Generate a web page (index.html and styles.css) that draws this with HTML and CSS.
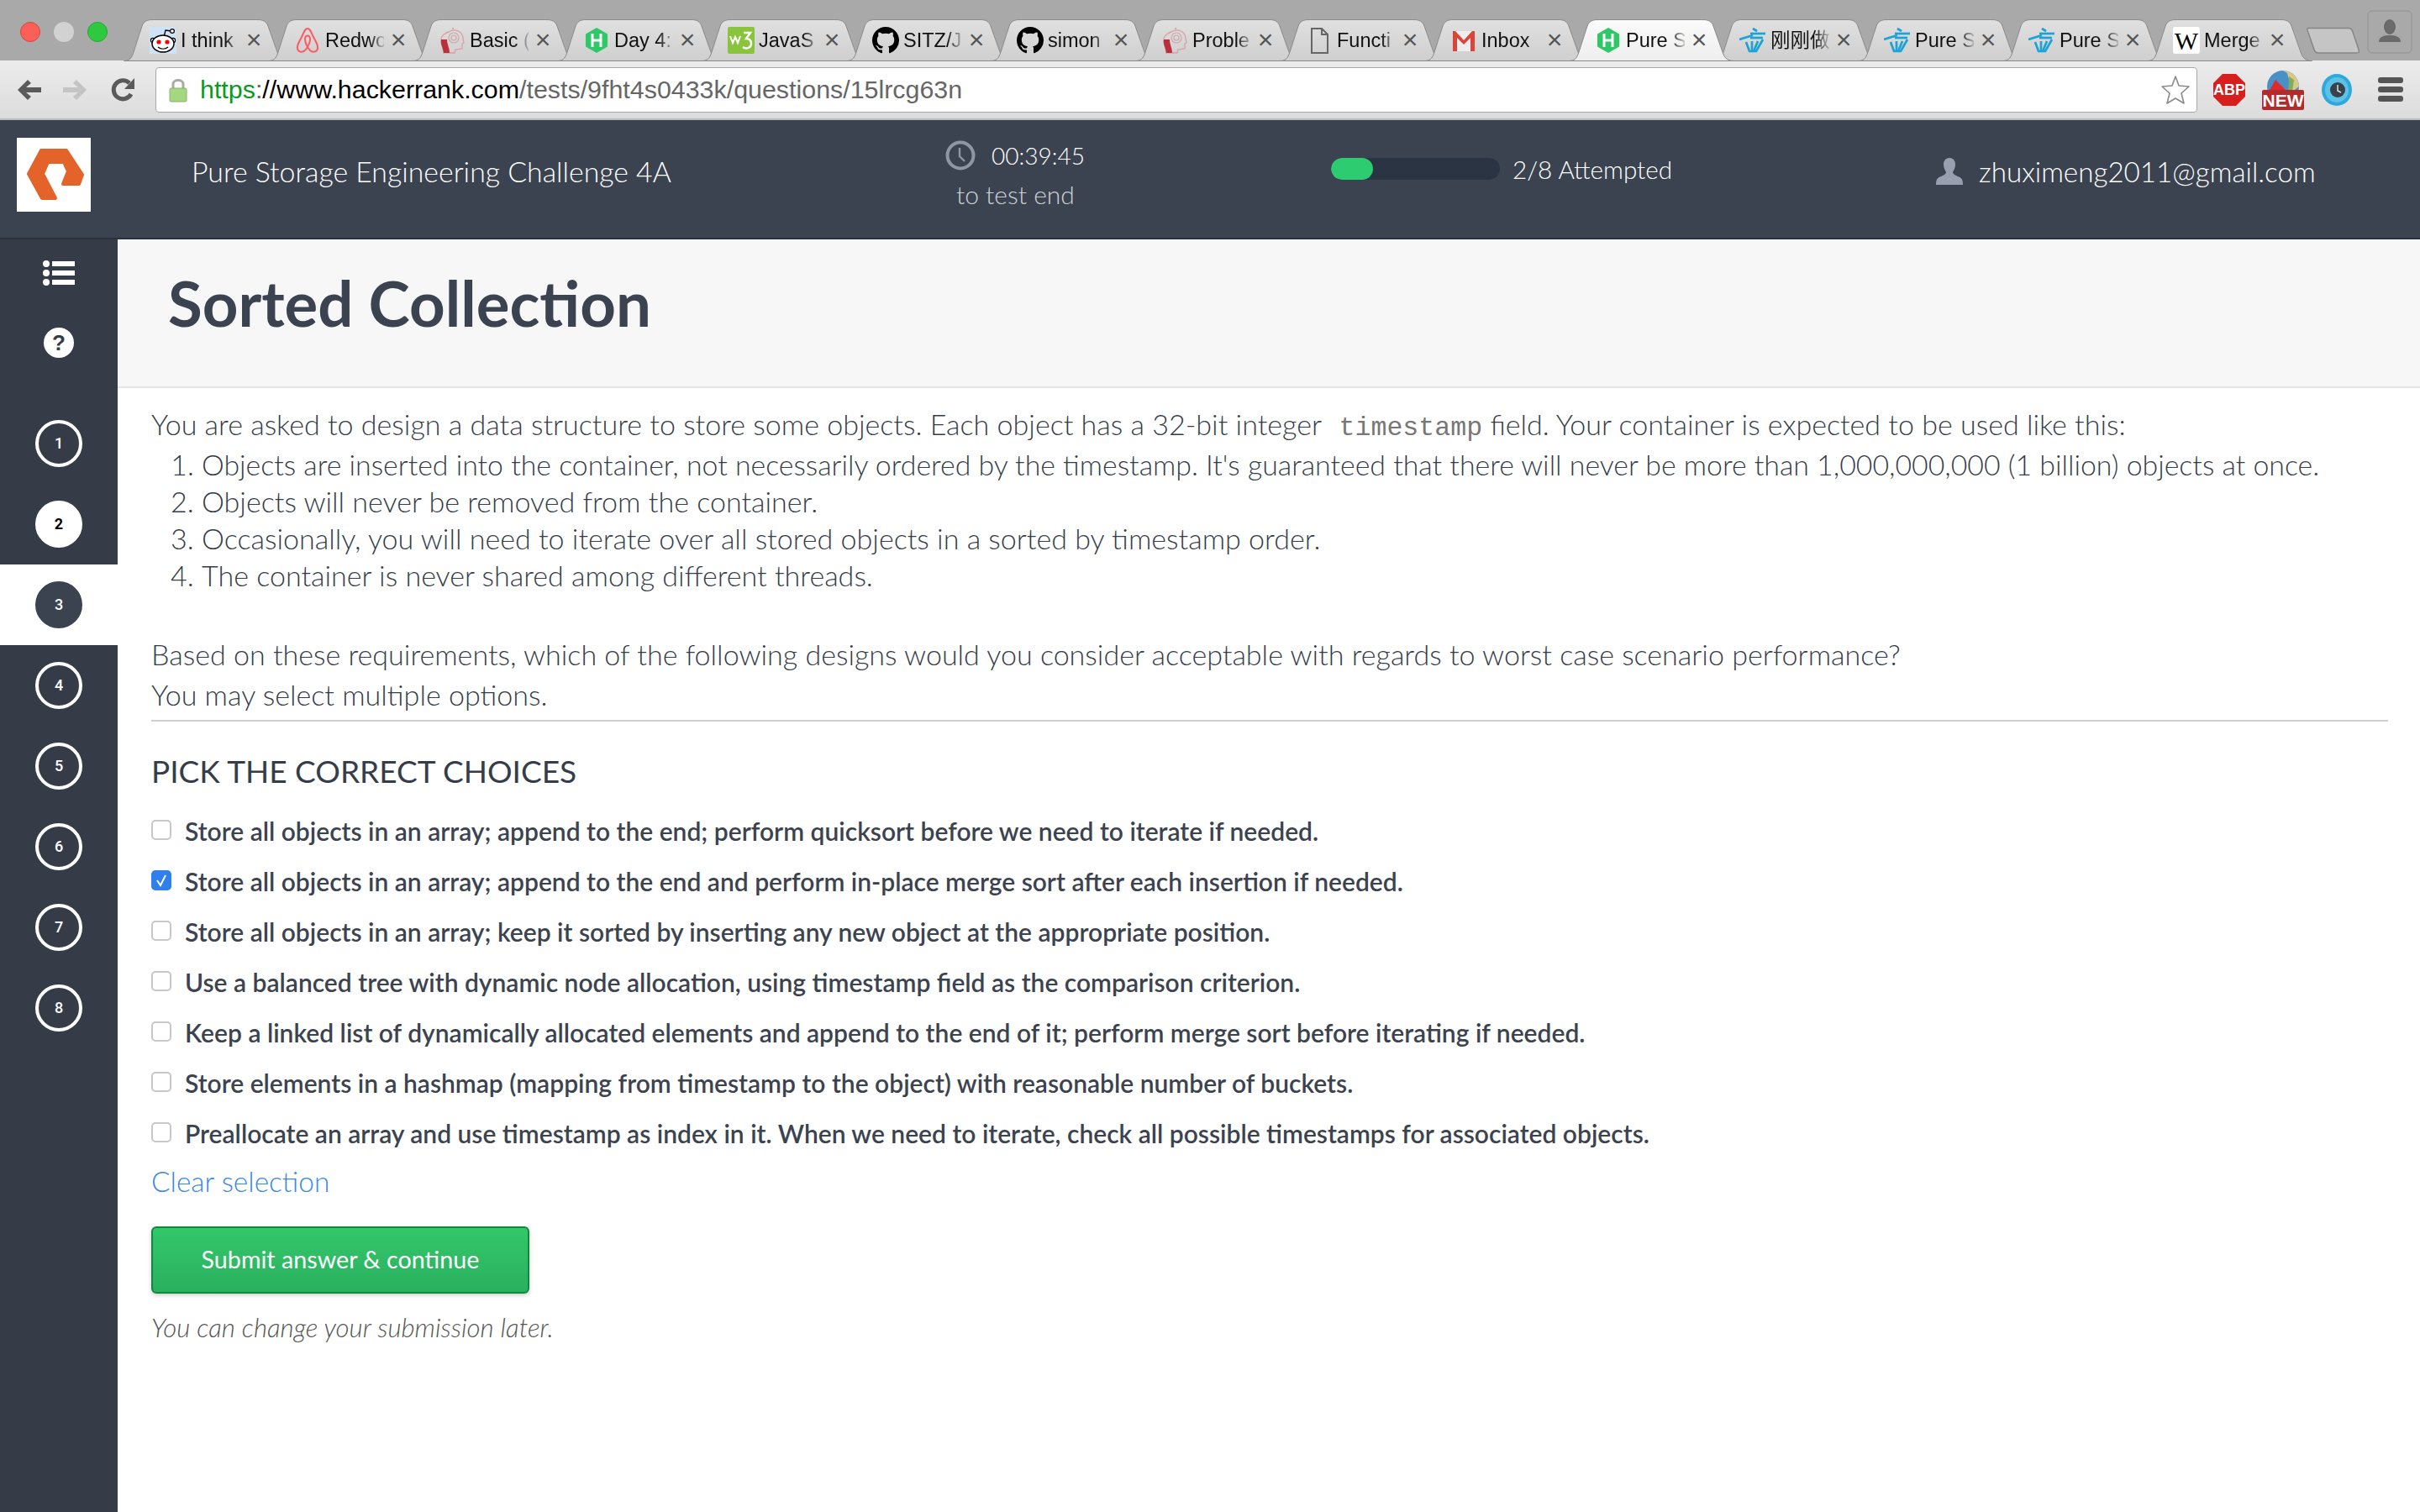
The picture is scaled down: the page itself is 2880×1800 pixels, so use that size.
FILE: index.html
```html
<!DOCTYPE html>
<html lang="en">
<head>
<meta charset="utf-8">
<title>Sorted Collection</title>
<link rel="stylesheet" href="styles.css">
</head>
<body>
<svg class="defs" width="0" height="0" aria-hidden="true">
  <defs>
    <linearGradient id="tabfill" x1="0" y1="0" x2="0" y2="1"><stop offset="0" stop-color="#e0e0e0"/><stop offset="1" stop-color="#cfcfcf"/></linearGradient>
    <linearGradient id="tabactive" x1="0" y1="0" x2="0" y2="1"><stop offset="0" stop-color="#fbfbfb"/><stop offset="1" stop-color="#eeeeee"/></linearGradient>
    <path id="tabshape" d="M0.5 49.5C8 49.5 10 45 12 39L22 8C24 2.5 28 0.5 34 0.5L160 0.5C166 0.5 170 2.5 172 8L183 39C185 45 188 49.5 196.5 49.5Z"/>
    <g id="ic-brain"><path d="M12 6C20 1 29 6 29 14L30 19L28 20L28 26L20 27L19 31L6 31C6 24 2 20 3 14C3 11 8 7 12 6Z" fill="none" stroke="#d9a0a4" stroke-width="1.3"/><path d="M3 15C2 21 5 24 6 31L13 31C13 25 10 21 10 15Z" fill="#b9303a"/><circle cx="18" cy="13" r="6" fill="none" stroke="#cfa9ab" stroke-width="1.2"/><circle cx="18" cy="13" r="3" fill="none" stroke="#cfa9ab" stroke-width="1.2"/><circle cx="17" cy="2" r="1" fill="#cf9a9e"/></g>
    <g id="ic-hr"><path d="M16 1L29 8.5L29 23.5L16 31L3 23.5L3 8.5Z" fill="#2ec866"/><path d="M11 8V24M21 8V24M11 16H21" stroke="#fff" stroke-width="3" fill="none"/></g>
    <path id="ic-gh" d="M8 0C3.58 0 0 3.58 0 8c0 3.54 2.29 6.53 5.47 7.59.4.07.55-.17.55-.38 0-.19-.01-.82-.01-1.49-2.01.37-2.53-.49-2.69-.94-.09-.23-.48-.94-.82-1.13-.28-.15-.68-.52-.01-.53.63-.01 1.08.58 1.23.82.72 1.21 1.87.87 2.33.66.07-.52.28-.87.51-1.07-1.78-.2-3.64-.89-3.64-3.95 0-.87.31-1.59.82-2.15-.08-.2-.36-1.02.08-2.12 0 0 .67-.21 2.2.82.64-.18 1.32-.27 2-.27.68 0 1.36.09 2 .27 1.53-1.04 2.2-.82 2.2-.82.44 1.1.16 1.92.08 2.12.51.56.82 1.27.82 2.15 0 3.07-1.87 3.75-3.65 3.95.29.25.54.73.54 1.48 0 1.07-.01 1.93-.01 2.2 0 .21.15.46.55.38A8.013 8.013 0 0016 8c0-4.42-3.58-8-8-8z"/>
    <g id="ic-bird" fill="none" stroke="#1aa3d6" stroke-width="2.7"><path d="M16 2L21 5"/><path d="M13 8H31"/><path d="M0 15L16 10"/><path d="M13 13H28"/><path d="M8 18L12 29H20L28 15"/><path d="M15 17V29"/><path d="M22 17L17 29"/></g>
  </defs>
</svg>

<div class="window">
  <div class="tabstrip">
    <div class="lights">
      <span class="light red"></span><span class="light grey"></span><span class="light green"></span>
    </div>
    <div class="tabs">
      <div class="tab">
        <svg class="tab-bg" viewBox="0 0 197 50"><use href="#tabshape"/></svg>
        <svg class="fav" viewBox="0 0 32 32"><rect width="32" height="32" fill="#cfe3f7"/><path d="M17 12L19 4L26 5" fill="none" stroke="#000" stroke-width="1.3"/><circle cx="27" cy="5" r="2.4" fill="#fff" stroke="#000" stroke-width="1.2"/><circle cx="4" cy="16" r="2.6" fill="#fff" stroke="#000" stroke-width="1.2"/><circle cx="28" cy="16" r="2.6" fill="#fff" stroke="#000" stroke-width="1.2"/><ellipse cx="16" cy="20" rx="13" ry="10" fill="#fff" stroke="#000" stroke-width="1.5"/><circle cx="11" cy="18" r="2.6" fill="#f00"/><circle cx="21" cy="18" r="2.6" fill="#f00"/><path d="M10 24C13 27 19 27 22 24" fill="none" stroke="#000" stroke-width="1.2"/></svg>
        <span class="tab-title">I think</span><span class="tab-x">×</span>
      </div>
      <div class="tab">
        <svg class="tab-bg" viewBox="0 0 197 50"><use href="#tabshape"/></svg>
        <svg class="fav" viewBox="0 0 32 32"><path d="M16 2C13 2 12 6 9 12C6 18 3 22 4 26C5 30 10 31 13 28C15 26 19 20 19 15C19 12 18 10.5 16 10.5C14 10.5 13 12 13 15C13 20 17 26 19 28C22 31 27 30 28 26C29 22 26 18 23 12C20 6 19 2 16 2Z" fill="none" stroke="#ff5a5f" stroke-width="2"/></svg>
        <span class="tab-title">Redwo</span><span class="tab-x">×</span>
      </div>
      <div class="tab">
        <svg class="tab-bg" viewBox="0 0 197 50"><use href="#tabshape"/></svg>
        <svg class="fav" viewBox="0 0 32 32"><use href="#ic-brain"/></svg>
        <span class="tab-title">Basic (</span><span class="tab-x">×</span>
      </div>
      <div class="tab">
        <svg class="tab-bg" viewBox="0 0 197 50"><use href="#tabshape"/></svg>
        <svg class="fav" viewBox="0 0 32 32"><use href="#ic-hr"/></svg>
        <span class="tab-title">Day 4:</span><span class="tab-x">×</span>
      </div>
      <div class="tab">
        <svg class="tab-bg" viewBox="0 0 197 50"><use href="#tabshape"/></svg>
        <svg class="fav" viewBox="0 0 32 32"><rect width="32" height="32" rx="2" fill="#8ac43f"/><path d="M3 11L6 19L9 12L12 19L15 11" fill="none" stroke="#fff" stroke-width="2"/><path d="M19 7H27L22 14C27 14 28 17 28 20C28 25 22 27 18 24" fill="none" stroke="#fff" stroke-width="2.4"/></svg>
        <span class="tab-title">JavaS</span><span class="tab-x">×</span>
      </div>
      <div class="tab">
        <svg class="tab-bg" viewBox="0 0 197 50"><use href="#tabshape"/></svg>
        <svg class="fav" viewBox="0 0 16 16"><use href="#ic-gh"/></svg>
        <span class="tab-title">SITZ/J</span><span class="tab-x">×</span>
      </div>
      <div class="tab">
        <svg class="tab-bg" viewBox="0 0 197 50"><use href="#tabshape"/></svg>
        <svg class="fav" viewBox="0 0 16 16"><use href="#ic-gh"/></svg>
        <span class="tab-title">simon</span><span class="tab-x">×</span>
      </div>
      <div class="tab">
        <svg class="tab-bg" viewBox="0 0 197 50"><use href="#tabshape"/></svg>
        <svg class="fav" viewBox="0 0 32 32"><use href="#ic-brain"/></svg>
        <span class="tab-title">Proble</span><span class="tab-x">×</span>
      </div>
      <div class="tab">
        <svg class="tab-bg" viewBox="0 0 197 50"><use href="#tabshape"/></svg>
        <svg class="fav" viewBox="0 0 32 32"><path d="M7 2H19L26 9V31H7ZM19 2V9H26" fill="none" stroke="#666" stroke-width="2"/></svg>
        <span class="tab-title">Functi</span><span class="tab-x">×</span>
      </div>
      <div class="tab">
        <svg class="tab-bg" viewBox="0 0 197 50"><use href="#tabshape"/></svg>
        <svg class="fav" viewBox="0 0 32 32"><rect x="3" y="5" width="26" height="24" fill="#eee"/><path d="M3 29V5H6L16 16L26 5H29V29H24V13L16 21L8 13V29Z" fill="#db4437"/></svg>
        <span class="tab-title">Inbox</span><span class="tab-x">×</span>
      </div>
      <div class="tab active">
        <svg class="tab-bg" viewBox="0 0 197 50"><use href="#tabshape"/></svg>
        <svg class="fav" viewBox="0 0 32 32"><use href="#ic-hr"/></svg>
        <span class="tab-title">Pure S</span><span class="tab-x">×</span>
      </div>
      <div class="tab">
        <svg class="tab-bg" viewBox="0 0 197 50"><use href="#tabshape"/></svg>
        <svg class="fav" viewBox="0 0 32 32"><use href="#ic-bird"/></svg>
        <span class="tab-title cjk">刚刚做</span><span class="tab-x">×</span>
      </div>
      <div class="tab">
        <svg class="tab-bg" viewBox="0 0 197 50"><use href="#tabshape"/></svg>
        <svg class="fav" viewBox="0 0 32 32"><use href="#ic-bird"/></svg>
        <span class="tab-title">Pure S</span><span class="tab-x">×</span>
      </div>
      <div class="tab">
        <svg class="tab-bg" viewBox="0 0 197 50"><use href="#tabshape"/></svg>
        <svg class="fav" viewBox="0 0 32 32"><use href="#ic-bird"/></svg>
        <span class="tab-title">Pure S</span><span class="tab-x">×</span>
      </div>
      <div class="tab">
        <svg class="tab-bg" viewBox="0 0 197 50"><use href="#tabshape"/></svg>
        <span class="fav wiki">W</span>
        <span class="tab-title">Merge</span><span class="tab-x">×</span>
      </div>
    </div>
    <svg class="newtab" viewBox="0 0 64 32"><path d="M1.5 1.5H50C53 1.5 54 3 55 6L62 27C63 30 62 31 59 31H14C11 31 10 30 9 27L1 4C0.5 2.5 0.8 1.5 1.5 1.5Z" fill="#c5c5c5" stroke="#858585" stroke-width="1.5"/></svg>
    <div class="profile"><svg viewBox="0 0 54 52" width="54" height="52"><rect x="1" y="1" width="52" height="50" rx="5" fill="#a9a9a9" stroke="#919191"/><ellipse cx="27" cy="20" rx="7" ry="9" fill="#6b6b6b"/><path d="M14 38C14 31 21 30 27 30C33 30 40 31 40 38Z" fill="#6b6b6b"/></svg></div>
  </div>

  <div class="toolbar">
    <svg class="nav-ic back" viewBox="0 0 32 32"><path d="M2 16L14 4L18 8L12 13H30V19H12L18 24L14 28Z" fill="#5a5a5a"/></svg>
    <svg class="nav-ic forward" viewBox="0 0 32 32"><path d="M30 16L18 4L14 8L20 13H2V19H20L14 24L18 28Z" fill="#c4c4c4"/></svg>
    <svg class="nav-ic reload" viewBox="0 0 32 32"><path d="M25 21A11 11 0 1 1 23 8" fill="none" stroke="#5a5a5a" stroke-width="5"/><path d="M29 2V15H17Z" fill="#5a5a5a"/></svg>
    <div class="omnibox">
      <svg class="lock" viewBox="0 0 22 30"><path d="M5 14V8C5 2 17 2 17 8V14" fill="none" stroke="#a9a9a9" stroke-width="3"/><rect x="1" y="13" width="20" height="16" rx="1.5" fill="#a4d87f" stroke="#8fae74"/></svg>
      <div class="url"><span class="scheme">https</span><span class="rest">:</span>//<span class="host">www.hackerrank.com</span><span class="rest">/tests/9fht4s0433k/questions/15lrcg63n</span></div>
      <svg class="star" viewBox="0 0 36 36"><path d="M18 2L22 13L34 14L25 22L28 34L18 28L8 34L11 22L2 14L14 13Z" fill="#fff" stroke="#8a8a8a" stroke-width="1.6" stroke-linejoin="round"/></svg>
    </div>
    <div class="extensions">
      <svg class="ext" viewBox="0 0 38 38" width="38" height="38"><path d="M11 0H27L38 11V27L27 38H11L0 27V11Z" fill="#d5201e"/><text x="19" y="25" class="abp">ABP</text></svg>
      <svg class="ext" viewBox="0 0 50 48" width="50" height="48"><circle cx="25" cy="20" r="19" fill="#4a8fc7"/><path d="M25 1A19 19 0 0 1 44 20L36 26L30 4Z" fill="#d8c98a"/><path d="M8 26L16 12L26 22L30 26Z" fill="#df2a2a"/><path d="M32 8L38 12L36 26H31Z" fill="#7fae5a"/><rect x="0" y="24" width="50" height="24" rx="2" fill="#b52a2a"/><text x="25" y="44" class="newbadge">NEW</text></svg>
      <svg class="ext" viewBox="0 0 38 38" width="38" height="38"><ellipse cx="19" cy="19" rx="18" ry="19" fill="#2fa8dc"/><ellipse cx="19" cy="19" rx="14" ry="15" fill="#5cc3e6"/><circle cx="20" cy="19" r="9" fill="#39424a"/><path d="M20 13V20L24 22" stroke="#cfe6ef" fill="none" stroke-width="1.5"/></svg>
      <div class="menu"><span></span><span></span><span></span></div>
    </div>
  </div>

  <header class="topbar">
    <div class="logo">
      <svg viewBox="0 0 88 88" width="88" height="88"><path d="M29 15H59L78 44L74 55H55L61 40L56 29H37L31 43L46 72H30L14 43Z" fill="#e4632a" stroke="#e4632a" stroke-width="4" stroke-linejoin="round"/></svg>
    </div>
    <div class="test-name">Pure Storage Engineering Challenge 4A</div>
    <div class="timer">
      <div class="timer-row">
        <svg viewBox="0 0 36 36" width="36" height="36"><circle cx="18" cy="18" r="15.5" fill="none" stroke="#8d96a5" stroke-width="4"/><path d="M17 9V19L23 25" fill="none" stroke="#8d96a5" stroke-width="2.4"/></svg>
        <span class="time">00:39:45</span>
      </div>
      <div class="to-end">to test end</div>
    </div>
    <div class="progress">
      <div class="bar"><div class="fill"></div></div>
      <span class="attempted">2/8 Attempted</span>
    </div>
    <div class="user">
      <svg viewBox="0 0 34 34" width="34" height="34"><path d="M17 1C22 1 24 5 24 9C24 13 22 16 21 18C21 20 23 21 27 23C32 25 33 27 33 33H1C1 27 2 25 7 23C11 21 13 20 13 18C12 16 10 13 10 9C10 5 12 1 17 1Z" fill="#98a0b0"/></svg>
      <span>zhuximeng2011@gmail.com</span>
    </div>
  </header>

  <div class="body-row">
    <nav class="sidebar">
      <div class="side-icons">
        <svg viewBox="0 0 38 30" width="38" height="30"><circle cx="4" cy="4" r="4" fill="#fff"/><circle cx="4" cy="15" r="4" fill="#fff"/><circle cx="4" cy="26" r="4" fill="#fff"/><rect x="11" y="1" width="27" height="6" fill="#fff"/><rect x="11" y="12" width="27" height="6" fill="#fff"/><rect x="11" y="23" width="27" height="6" fill="#fff"/></svg>
        <div class="help">?</div>
      </div>
      <ul class="questions">
        <li><span class="q">1</span></li>
        <li class="done"><span class="q">2</span></li>
        <li class="current"><span class="q">3</span></li>
        <li><span class="q">4</span></li>
        <li><span class="q">5</span></li>
        <li><span class="q">6</span></li>
        <li><span class="q">7</span></li>
        <li><span class="q">8</span></li>
      </ul>
    </nav>
    <main class="main">
      <div class="q-head"><h1>Sorted Collection</h1></div>
      <div class="q-body">
        <p class="intro">You are asked to design a data structure to store some objects. Each object has a 32-bit integer <code>timestamp</code> field. Your container is expected to be used like this:</p>
        <ol class="reqs">
          <li>Objects are inserted into the container, not necessarily ordered by the timestamp. It's guaranteed that there will never be more than 1,000,000,000 (1 billion) objects at once.</li>
          <li>Objects will never be removed from the container.</li>
          <li>Occasionally, you will need to iterate over all stored objects in a sorted by timestamp order.</li>
          <li>The container is never shared among different threads.</li>
        </ol>
        <p class="ask">Based on these requirements, which of the following designs would you consider acceptable with regards to worst case scenario performance?<br>You may select multiple options.</p>
        <hr class="rule">
        <h2>PICK THE CORRECT CHOICES</h2>
        <div class="choices">
          <div class="choice"><span class="box"></span><span>Store all objects in an array; append to the end; perform quicksort before we need to iterate if needed.</span></div>
          <div class="choice"><span class="box checked"><svg viewBox="0 0 24 24" width="24" height="24"><path d="M7 12L11 18L17 6" fill="none" stroke="#fff" stroke-width="2"/></svg></span><span>Store all objects in an array; append to the end and perform in-place merge sort after each insertion if needed.</span></div>
          <div class="choice"><span class="box"></span><span>Store all objects in an array; keep it sorted by inserting any new object at the appropriate position.</span></div>
          <div class="choice"><span class="box"></span><span>Use a balanced tree with dynamic node allocation, using timestamp field as the comparison criterion.</span></div>
          <div class="choice"><span class="box"></span><span>Keep a linked list of dynamically allocated elements and append to the end of it; perform merge sort before iterating if needed.</span></div>
          <div class="choice"><span class="box"></span><span>Store elements in a hashmap (mapping from timestamp to the object) with reasonable number of buckets.</span></div>
          <div class="choice"><span class="box"></span><span>Preallocate an array and use timestamp as index in it. When we need to iterate, check all possible timestamps for associated objects.</span></div>
        </div>
        <a class="clear">Clear selection</a>
        <button class="submit">Submit answer &amp; continue</button>
        <p class="note">You can change your submission later.</p>
      </div>
    </main>
  </div>
</div>
</body>
</html>
```

FILE: styles.css
```css
* { box-sizing: border-box; }
html, body { margin: 0; padding: 0; }
body { width: 2880px; height: 1800px; overflow: hidden; font-family: "Lato", "Noto Sans", sans-serif; color: #3c4350; background: #fff; }
.defs { display: block; height: 0; }
.window { display: flex; flex-direction: column; height: 1800px; }

/* tab strip */
.tabstrip { height: 72px; background: #a9a9a9; display: flex; align-items: flex-start; flex: none; }
.lights { width: 147px; flex: none; padding: 26px 0 0 24px; display: flex; gap: 16px; }
.light { width: 24px; height: 24px; border-radius: 50%; }
.light.red { background: #fb6058; border: 1px solid #d9463f; }
.light.grey { background: #d2d2d2; }
.light.green { background: #2fc940; border: 1px solid #26a934; }
.tabs { display: flex; padding-top: 23px; width: 2598px; flex: none; }
.tab { position: relative; width: 172px; height: 49px; flex: none; font: 23.5px/50px "Liberation Sans", "Noto Sans CJK SC", sans-serif; color: #111; }
.tab-bg { position: absolute; left: 0; top: 0; width: 197px; height: 50px; fill: url(#tabfill); stroke: #8a8a8a; stroke-width: 1; }
.tab.active { z-index: 2; }
.tab.active .tab-bg { fill: url(#tabactive); }
.fav { position: absolute; left: 31px; top: 9px; width: 32px; height: 32px; }
.fav.wiki { background: #fff; border-radius: 3px; color: #000; font: 30px/34px "Liberation Serif", serif; text-align: center; }
.tab-title { position: absolute; left: 68px; top: 0; width: 70px; height: 50px; overflow: hidden; white-space: nowrap; -webkit-mask-image: linear-gradient(90deg, #000 75%, transparent 105%); mask-image: linear-gradient(90deg, #000 75%, transparent 105%); }
.tab-x { position: absolute; left: 143px; top: 0; width: 24px; text-align: center; color: #555; font-size: 32px; line-height: 48px; }
.newtab { width: 64px; height: 32px; margin: 32px 0 0 0; flex: none; }
.profile { margin: 12px 0 0 8px; flex: none; width: 54px; height: 52px; }

/* toolbar */
.toolbar { height: 71px; flex: none; display: flex; align-items: center; background: linear-gradient(#ececec, #dcdcdc); border-bottom: 2px solid #b9b9b9; }
.nav-ic { width: 32px; height: 32px; flex: none; }
.nav-ic.back { margin-left: 19px; }
.nav-ic.forward { margin-left: 22px; }
.nav-ic.reload { margin-left: 26px; }
.omnibox { margin-left: 22px; width: 2430px; height: 54px; flex: none; background: #fff; border: 1px solid #a8a8a8; border-radius: 4px; display: flex; align-items: center; padding: 0 7px 0 15px; }
.lock { width: 22px; height: 30px; flex: none; }
.url { margin-left: 15px; font: 30.4px "Liberation Sans", sans-serif; color: #000; flex: 1; white-space: nowrap; }
.scheme { color: #0a9b1e; }
.rest { color: #666; }
.star { width: 36px; height: 36px; flex: none; }
.extensions { display: flex; align-items: center; margin-left: 19px; gap: 20px; }
.ext { flex: none; }
.abp { font: bold 18px "Liberation Sans", sans-serif; fill: #fff; text-anchor: middle; }
.newbadge { font: bold 21px "Liberation Sans", sans-serif; fill: #fff; text-anchor: middle; }
.menu { display: flex; flex-direction: column; gap: 4px; width: 30px; margin-left: 10px; }
.menu span { height: 7px; border-radius: 3px; background: #555; }

/* header */
.topbar { height: 142px; flex: none; background: #3c4350; border-bottom: 2px solid #2c323d; display: flex; align-items: flex-start; color: #fff; font-size: 33.85px; font-weight: 300; }
.logo { margin: 21px 0 0 20px; width: 88px; height: 88px; background: #fff; flex: none; }
.test-name { margin: 39px 0 0 120px; width: 569px; flex: none; line-height: 44px; white-space: nowrap; }
.timer { margin: 24px 0 0 328px; width: 200px; flex: none; }
.timer-row { display: flex; align-items: center; gap: 19px; height: 36px; }
.time { font-size: 28px; line-height: 36px; }
.to-end { margin: 10px 0 0 13px; font-size: 30px; line-height: 36px; color: #ccd0d6; }
.progress { margin: 45px 0 0 259px; display: flex; align-items: center; gap: 15px; height: 26px; flex: none; width: 430px; }
.bar { width: 201px; height: 26px; background: #2b3442; border-radius: 13px; flex: none; overflow: hidden; }
.fill { width: 50px; height: 26px; background: #2ecc71; border-radius: 13px; }
.attempted { font-size: 29.7px; white-space: nowrap; }
.user { margin: 44px 0 0 289px; display: flex; align-items: center; gap: 18px; height: 34px; white-space: nowrap; flex: none; font-size: 33.2px; }

/* layout */
.body-row { flex: 1; display: flex; min-height: 0; }
.sidebar { width: 140px; flex: none; background: #353c48; }
.side-icons { display: flex; flex-direction: column; align-items: center; padding-top: 25px; height: 195px; }
.help { margin-top: 50px; width: 36px; height: 36px; border-radius: 50%; background: #fff; color: #353c48; font: bold 26px/36px "Liberation Sans", sans-serif; text-align: center; }
.questions { list-style: none; margin: 0; padding: 0; }
.questions li { height: 96px; display: flex; align-items: center; justify-content: center; }
.q { width: 56px; height: 56px; border-radius: 50%; border: 4px solid #fff; color: #fff; display: flex; align-items: center; justify-content: center; font: 500 18px "Roboto", sans-serif; padding-bottom: 1px; }
.done .q { background: #fff; color: #000; font-weight: 700; }
.current { background: #fff; }
.current .q { background: #3c4350; border-color: #3c4350; }

/* main */
.main { flex: 1; min-width: 0; }
.q-head { height: 177px; background: #f7f7f7; border-bottom: 2px solid #e5e5e5; padding-left: 60px; }
h1 { margin: 0; font-size: 74.4px; font-weight: 700; line-height: 151px; color: #3c4350; }
.q-body { padding: 19px 38px 0 40px; font-size: 34.05px; font-weight: 300; color: #363d4a; }
.q-body p { margin: 0; }
.intro, .ask { line-height: 47.5px; }
code { font: 31.6px "Liberation Mono", monospace; color: #777; margin: 0 0 0 12px; }
.reqs { margin: 2.5px 0 0; padding: 0 0 0 60px; }
.reqs li { line-height: 44px; }
.reqs li:first-child { font-size: 33.85px; }
.q-body .ask { margin-top: 48px; }
.rule { margin: 7px 0 0; border: 0; height: 2px; background: #cfcfcf; }
h2 { margin: 37px 0 0; font-size: 37px; font-weight: 400; line-height: 44px; }
.choices { margin-top: 20px; }
.choice { height: 60px; display: flex; align-items: center; gap: 16px; font-size: 30px; font-weight: 600; padding-bottom: 2px; color: #3c4350; }
.box { width: 24px; height: 24px; flex: none; border: 2px solid #c8c8c8; border-radius: 5px; background: #fff; margin-top: -2px; }
.box.checked { background: #2f80ed; border: 0; }
.box.checked svg { display: block; }
.clear { display: block; margin-top: 4px; line-height: 44px; color: #3a86ea; font-size: 33.4px; }
.submit { display: block; margin-top: 32px; width: 450px; height: 80px; border: 2px solid #0d8a3e; border-radius: 6px; background: linear-gradient(#33c76a, #2ab05f); color: #fff; font: 400 28.7px "Lato", sans-serif; padding: 0 0 3px; box-shadow: 0 2px 5px rgba(0,0,0,.2); }
.q-body .note { margin-top: 20px; line-height: 40px; font-size: 31.2px; font-style: italic; color: #555; }
```
